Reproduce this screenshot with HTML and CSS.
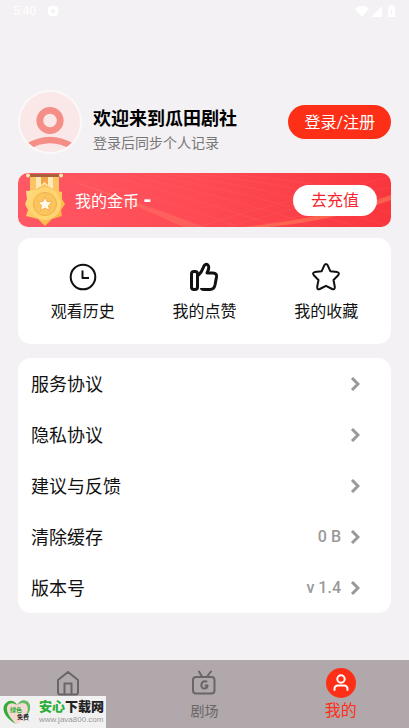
FILE: index.html
```html
<!DOCTYPE html>
<html lang="zh-CN">
<head>
<meta charset="utf-8">
<meta name="viewport" content="width=device-width, initial-scale=1">
<title>瓜田剧社</title>
<link rel="stylesheet" href="styles.css">
</head>
<body>
<div class="app">
  <div class="status">
    <span class="status-time">5:40</span>
    <svg class="status-badge" viewBox="0 0 12 12" aria-hidden="true"><rect x="1" y="1" width="10" height="10" rx="3" fill="#fff"/><circle cx="6" cy="6" r="2" fill="#f3f1f3"/></svg>
    <svg class="status-signals" viewBox="0 0 44 14" aria-hidden="true"><g fill="#fff"><path d="M1 4.500Q8 -1 15 4.500L8 13Z"/><path d="M17 13L28 2V13Z"/><path d="M34 3h2V1h3v2h2v10h-7Z"/></g><path d="M37.500 5v5" stroke="#f3f1f3"/></svg>
  </div>

  <main class="content">
    <header class="profile">
      <svg class="avatar" viewBox="0 0 64 64" aria-hidden="true">
        <defs><clipPath id="face"><circle cx="32" cy="32" r="30"/></clipPath></defs>
        <circle cx="32" cy="32" r="32" fill="#fbf8f9"/>
        <circle cx="32" cy="32" r="30" fill="#fae8e8"/>
        <g clip-path="url(#face)" fill="none" stroke="#f68e88">
          <circle cx="32" cy="30.500" r="10.200" stroke-width="6.800"/>
          <path d="M9 57Q32 43 55 57" stroke-width="6.500"/>
        </g>
      </svg>
      <div class="welcome">
        <h1>欢迎来到瓜田剧社</h1>
        <p>登录后同步个人记录</p>
      </div>
      <button class="login" type="button">登录/注册</button>
    </header>

    <section class="coins">
      <svg class="streaks" viewBox="0 0 373 54" preserveAspectRatio="none" aria-hidden="true">
        <g fill="none" stroke="#ff8585" stroke-opacity=".14">
          <path d="M140 0Q250 12 373 54M120 0Q230 18 340 54M100 0Q205 22 300 54M80 0Q180 26 260 54M165 0Q280 10 373 40M195 0Q300 8 373 27M60 8Q150 26 220 54"/>
          <path d="M210 54Q290 30 373 14M240 54Q300 36 373 28M180 54Q270 25 373 4"/>
        </g>
        <path d="M45 5Q105 24 187 54H165Q110 28 45 5Z" fill="#ff9a72" fill-opacity=".25"/>
        <path d="M225 54Q310 45 373 22V27Q315 48 250 54Z" fill="#ff9a62" fill-opacity=".4"/>
      </svg>
      <svg class="medal" viewBox="0 0 42 54" aria-hidden="true">
        <defs><linearGradient id="gold" x2="1" y2="1"><stop stop-color="#ffe28a"/><stop offset="1" stop-color="#f7ad35"/></linearGradient></defs>
        <path d="M6 2H35V20H6Z" fill="#fbc565"/>
        <path d="M12 2H29V16L20.500 11 12 16Z" fill="#ffe9b4"/>
        <path d="M17 3H24V12L20.500 9 17 12Z" fill="#f2a345"/>
        <rect x="2" y="1" width="37" height="3" rx="1.500" fill="#a9603f"/>
        <circle cx="4" cy="2.500" r="2" fill="#ffe7ae"/><circle cx="37" cy="2.500" r="2" fill="#ffe7ae"/>
        <path d="M21 14L28 17 38 19 38 26 41 31 37 37 38 43 28 46 21 53 14 46 2 43 4 37 1 31 3 26 2 18 13 17Z" fill="url(#gold)"/>
        <circle cx="21" cy="31" r="16" fill="#ffd572"/>
        <circle cx="21" cy="31" r="11.500" fill="#fbc45c" stroke="#f2b04a"/>
        <path d="M21 24L23 28.500 28 29 24.500 32.500 25.500 37.500 21 35 16.500 37.500 17.500 32.500 14 29 19 28.500Z" fill="#fffbe9" stroke="#f09b35" stroke-width=".7"/>
      </svg>
      <span class="coins-label">我的金币 <b>-</b></span>
      <button class="recharge" type="button">去充值</button>
    </section>

    <nav class="card shortcuts" aria-label="快捷入口">
      <a href="#history">
        <svg class="icon" viewBox="0 0 30 30" aria-hidden="true"><circle cx="15" cy="15" r="12.300"/><path d="M14.500 8.500V16H21"/></svg>
        <span>观看历史</span>
      </a>
      <a href="#likes">
        <svg class="icon icon-bold" viewBox="0 0 30 30" aria-hidden="true"><rect x="2.500" y="9.500" width="6" height="18" rx="2.500"/><path d="M9 13.500C13 10 13.500 8 14.500 5C15.500 2 17.500 1.800 19 3.200C20.800 5 19.500 8 18 11H24Q28 11 27.500 15L26 23Q25 27.500 21 27.500H15Q12.500 27.500 12.500 26"/></svg>
        <span>我的点赞</span>
      </a>
      <a href="#favorites">
        <svg class="icon" viewBox="0 0 30 30" aria-hidden="true"><path d="M13.300 3.300Q15 .8 16.700 3.300L19.300 9.200 26.300 10.100Q29 11 27.200 13.200L22.500 18 23.800 24.800Q24 28 21.200 27L15 23.800 8.800 27Q6 28 6.200 24.800L7.500 18 2.800 13.200Q1 11 3.700 10.100L10.700 9.200Z"/></svg>
        <span>我的收藏</span>
      </a>
    </nav>

    <ul class="card menu">
      <li><a href="#terms"><span class="menu-title">服务协议</span><svg class="chevron" viewBox="0 0 10 14" aria-hidden="true"><path d="M2 1L8 7L2 13"/></svg></a></li>
      <li><a href="#privacy"><span class="menu-title">隐私协议</span><svg class="chevron" viewBox="0 0 10 14" aria-hidden="true"><path d="M2 1L8 7L2 13"/></svg></a></li>
      <li><a href="#feedback"><span class="menu-title">建议与反馈</span><svg class="chevron" viewBox="0 0 10 14" aria-hidden="true"><path d="M2 1L8 7L2 13"/></svg></a></li>
      <li><a href="#cache"><span class="menu-title">清除缓存</span><span class="menu-value">0 B</span><svg class="chevron" viewBox="0 0 10 14" aria-hidden="true"><path d="M2 1L8 7L2 13"/></svg></a></li>
      <li><a href="#version"><span class="menu-title">版本号</span><span class="menu-value">v 1.4</span><svg class="chevron" viewBox="0 0 10 14" aria-hidden="true"><path d="M2 1L8 7L2 13"/></svg></a></li>
    </ul>
  </main>

  <div class="bottom">
    <nav class="tabs" aria-label="主导航">
      <a href="#home" aria-label="首页">
        <svg class="tab-icon" viewBox="0 0 30 30" aria-hidden="true"><path d="M5 12L15 4 25 12V24Q25 26.500 22.500 26.500H7.500Q5 26.500 5 24ZM11.500 26V15.500H18.500V26"/></svg>
      </a>
      <a href="#theater">
        <svg class="tab-icon" viewBox="0 0 30 30" aria-hidden="true"><rect x="4" y="9" width="21.500" height="16.500" rx="3"/><path d="M10 3.500L13 8.500M22 3.500L18 8.500"/><path d="M17.500 13.500C14 12.500 11.800 15 12.500 18.500C13.500 21.500 18.500 21 18.500 17.500H16.500"/></svg>
        <span>剧场</span>
      </a>
      <a class="active" href="#me" aria-current="page">
        <svg class="tab-icon" viewBox="0 0 30 30" aria-hidden="true"><circle class="tab-disc" cx="15" cy="15" r="15"/><circle cx="15" cy="11" r="3.700"/><path d="M8.500 22V21Q8.500 17.500 12 17.500H18Q21.500 17.500 21.500 21V22"/></svg>
        <span>我的</span>
      </a>
    </nav>
    <aside class="site-badge">
      <svg class="heart" viewBox="0 0 30 26" aria-hidden="true">
        <path d="M15 25C4 18 0 9 5 4C9 0 14 2 15.500 6C18 1 24 0 27 4C31 11 23 21 15 25Z" fill="#f5d9d3"/>
        <path d="M14 25C1 18 -1 8 4 4C8 0 13 2 15 6C10 3 6 4 5 8C4 14 9 20 14 25Z" fill="#31ab39"/>
        <path d="M15 6C18 0 24 0 27 4C30 9 27 15 22 20C26 14 27 8 24 5C21 3 18 4 15 6Z" fill="#61bb60"/>
        <text x="8" y="13" class="heart-green">绿色</text>
        <text x="15" y="20" class="heart-dark">免费</text>
      </svg>
      <div class="site-text"><strong><em>安心</em>下载网</strong><small>www.java800.com</small></div>
    </aside>
  </div>
</div>
</body>
</html>
```
FILE: styles.css
```css
* { box-sizing: border-box; }

body {
  margin: 0;
  background: #f3f1f3;
  color: #111;
  font-family: Roboto, "Noto Sans CJK SC", sans-serif;
  font-size: 16px;
  line-height: 24px;
}

a { color: inherit; text-decoration: none; }

button {
  border: 0;
  padding: 2px 16px 0;
  border-radius: 17px;
  font: inherit;
  white-space: nowrap;
}

svg { display: block; flex: none; }

.app {
  display: flex;
  flex-direction: column;
  min-height: 100vh;
}

.status {
  display: flex;
  align-items: center;
  height: 22px;
  padding: 0 11px 0 13px;
  color: #fff;
  font-size: 12px;
}

.status-badge { width: 12px; height: 12px; margin-left: 11px; }
.status-signals { width: 44px; height: 14px; margin-left: auto; }

.content {
  flex: 1;
  padding: 68px 18px 40px;
}

.profile {
  display: flex;
  align-items: center;
  margin-bottom: 19px;
}

.avatar { width: 64px; height: 64px; }

.welcome {
  flex: 1;
  margin-left: 11px;
  padding-top: 16px;
  white-space: nowrap;
}

.welcome h1 {
  margin: 0;
  color: #000;
  font-size: 18px;
  font-weight: 700;
  line-height: 26px;
}

.welcome p {
  margin: 0;
  color: #777;
  font-size: 14px;
  line-height: 22px;
}

.login {
  height: 34px;
  background: #fd2f17;
  color: #fff;
}

.coins {
  position: relative;
  display: flex;
  align-items: center;
  height: 54px;
  margin-bottom: 11px;
  padding: 0 14px 0 6px;
  overflow: hidden;
  border-radius: 10px;
  background: linear-gradient(100deg, #ff5865, #fe4a53 50%, #f9353d);
  color: #fff;
}

.streaks {
  position: absolute;
  inset: 0;
  width: 100%;
  height: 100%;
}

.medal { position: relative; width: 42px; height: 54px; }

.coins-label {
  position: relative;
  flex: 1;
  margin-left: 9px;
  padding-top: 2px;
}

.coins-label b { font-size: 20px; font-weight: 900; }

.recharge {
  position: relative;
  height: 31px;
  padding: 2px 18px 0;
  background: #fff;
  color: #f5262d;
}

.card {
  border-radius: 13px;
  background: #fff;
}

.shortcuts {
  display: grid;
  grid-template-columns: repeat(3, 1fr);
  margin-bottom: 14px;
  padding: 24px 4px 20px;
}

.shortcuts a {
  display: flex;
  flex-direction: column;
  align-items: center;
  gap: 8px;
}

.icon {
  width: 30px;
  height: 30px;
  fill: none;
  stroke: #111;
  stroke-width: 2;
  stroke-linejoin: round;
}

.icon-bold { stroke-width: 3; }

.menu {
  margin: 0;
  padding: 0;
  list-style: none;
}

.menu a {
  display: flex;
  align-items: center;
  height: 51px;
  padding: 0 31px 0 13px;
}

.menu-title { flex: 1; padding-top: 2px; font-size: 18px; }

.menu-value { margin-right: 9px; color: #999; font-weight: 500; }

.chevron {
  width: 10px;
  height: 14px;
  fill: none;
  stroke: #999;
  stroke-width: 3;
}

.bottom { position: relative; }

.tabs {
  display: grid;
  grid-template-columns: repeat(3, 1fr);
  height: 68px;
  padding-top: 8px;
  background: #b0a8aa;
}

.tabs a {
  display: flex;
  flex-direction: column;
  align-items: center;
  gap: 1px;
  color: #6b6567;
  font-size: 14px;
}

.tab-icon {
  width: 30px;
  height: 30px;
  fill: none;
  stroke: #6b6567;
  stroke-width: 2;
  stroke-linejoin: round;
  stroke-linecap: round;
}

.tabs .active { color: #fd2f17; font-size: 16px; }
.active .tab-icon { stroke: #fff; }
.tabs .tab-disc { fill: #fd2f17; stroke: none; }

.site-badge {
  position: absolute;
  left: 0;
  bottom: 0;
  display: flex;
  align-items: center;
  gap: 7px;
  width: 106px;
  height: 32px;
  padding-left: 2px;
  background: #f2f1f1;
  white-space: nowrap;
}

.heart { width: 30px; height: 26px; }
.heart-green { fill: #28ac32; font-size: 6px; font-weight: 700; }
.heart-dark { fill: #222; font-size: 6px; font-weight: 700; }

.site-text { display: flex; flex-direction: column; }

.site-text strong {
  color: #222;
  font-size: 13px;
  font-weight: 900;
  line-height: 16px;
}

.site-text em { color: #2bae35; font-style: normal; }

.site-text small {
  color: #999;
  font-family: "Liberation Sans", sans-serif;
  font-size: 8px;
  line-height: 10px;
}
```
